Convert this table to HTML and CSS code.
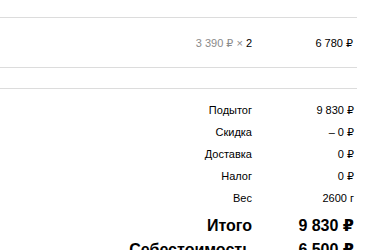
FILE: index.html
```html
<!DOCTYPE html>
<html lang="ru">
<head>
    <meta charset="UTF-8">
    <meta name="viewport" content="width=device-width, initial-scale=1.0">
    <title>Заказ</title>
    <link rel="stylesheet" href="styles.css">
</head>
<body>
    <div class="order">
        <div class="order-item">
            <div class="item-cost">3 390 ₽ <span class="times">×</span> <span class="qty">2</span></div>
            <div class="item-total">6 780 ₽</div>
        </div>
        <div class="order-spacer"></div>

        <table class="totals">
            <tr>
                <td class="label">Подытог</td>
                <td class="value">9 830 ₽</td>
            </tr>
            <tr>
                <td class="label">Скидка</td>
                <td class="value">– 0 ₽</td>
            </tr>
            <tr>
                <td class="label">Доставка</td>
                <td class="value">0 ₽</td>
            </tr>
            <tr>
                <td class="label">Налог</td>
                <td class="value">0 ₽</td>
            </tr>
            <tr>
                <td class="label">Вес</td>
                <td class="value">2600 г</td>
            </tr>
            <tr class="grand">
                <td class="label">Итого</td>
                <td class="value">9 830 ₽</td>
            </tr>
            <tr class="grand cost">
                <td class="label">Себестоимость</td>
                <td class="value">6 500 ₽</td>
            </tr>
        </table>
    </div>
</body>
</html>
```

FILE: styles.css
```css
* {
    margin: 0;
    padding: 0;
    box-sizing: border-box;
}

body {
    background: #fff;
    color: #000;
    font-family: "Liberation Sans", Arial, "DejaVu Sans", sans-serif;
    font-size: 11px;
    overflow: hidden;
}

.order {
    width: 357px;
    padding-top: 17px;
}

.order-item {
    display: flex;
    align-items: center;
    height: 51px;
    padding-top: 2px;
    border-top: 1px solid #dcdcdc;
    border-bottom: 1px solid #dcdcdc;
}

.item-cost {
    width: 252px;
    text-align: right;
    color: #8a8a8a;
}

.item-cost .qty {
    color: #000;
}

.item-total {
    flex: 1;
    text-align: right;
    padding-right: 4px;
}

.order-spacer {
    height: 21px;
    border-bottom: 1px solid #dcdcdc;
}

.totals {
    width: 100%;
    border-collapse: collapse;
    margin-top: 10px;
}

.totals td {
    height: 22px;
    text-align: right;
    vertical-align: middle;
    padding: 0;
}

.totals .label {
    width: 252px;
}

.totals .value {
    padding-right: 3px;
}

.totals .grand td {
    height: 32px;
    font-size: 16px;
    line-height: 18px;
    font-weight: bold;
    padding-top: 2px;
}

.totals .cost td {
    height: 18px;
    padding-top: 0;
}
```
